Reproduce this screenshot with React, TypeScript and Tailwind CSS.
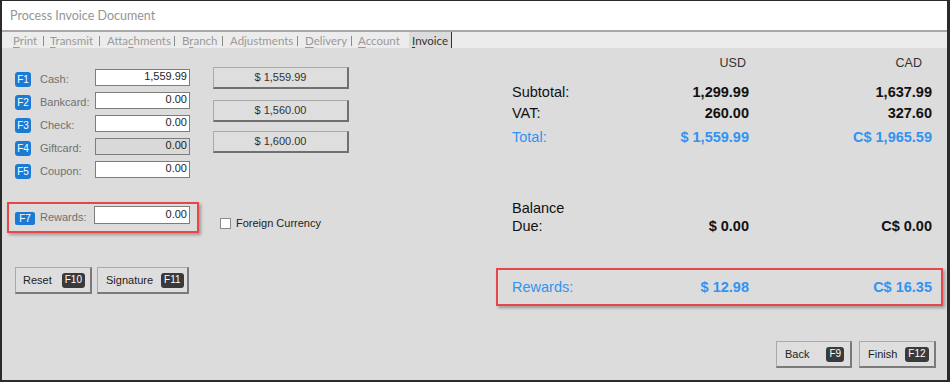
import React from "react";

const SANS = { fontFamily: '"Liberation Sans", Arial, sans-serif' };
const UI = { fontFamily: 'Lato, "Noto Sans", sans-serif' };

function FBadge({ k, wide }: { k: string; wide?: boolean }) {
  return (
    <div
      className={`mt-[3px] flex h-[15px] items-center justify-center rounded-[3px] bg-[#1a7bd6] text-[10px] leading-none text-white ${
        wide ? "w-[20px]" : "w-[16px]"
      }`}
    >
      {k}
    </div>
  );
}

function KBadge({ k }: { k: string }) {
  return (
    <div className="flex h-[15px] items-center rounded-[3px] bg-[#3a3a3a] px-[3px] text-[10px] leading-none text-white">
      {k}
    </div>
  );
}

function Field({ k, label, value, disabled }: { k: string; label: string; value: string; disabled?: boolean }) {
  return (
    <div className="flex h-[17px] items-start">
      <FBadge k={k} />
      <div className="ml-[9px] mt-[3px] w-[55px] text-[11px] leading-[14px] text-[#707070]">{label}</div>
      <div
        className={`flex h-[17px] w-[95px] items-center justify-end border border-[#7d7d7d] pb-[2px] pr-[2px] text-[11px] leading-none text-[#1e1e1e] ${
          disabled ? "bg-[#d9d9d9]" : "bg-white"
        }`}
      >
        {value}
      </div>
    </div>
  );
}

function QuickBtn({ v, cls }: { v: string; cls: string }) {
  return (
    <div
      className={`flex h-[22px] w-[136px] items-center justify-center border border-[#a9a9a9] border-b-2 border-r-2 border-b-[#707070] border-r-[#707070] bg-[#dedede] text-[11px] leading-none text-[#333] ${cls}`}
    >
      {v}
    </div>
  );
}

function ActBtn({ label, k, w, pl, gap }: { label: string; k: string; w: string; pl: string; gap: string }) {
  return (
    <div
      className={`flex h-[27px] items-center border border-[#a9a9a9] border-b-2 border-r-2 border-b-[#7a7a7a] border-r-[#7a7a7a] bg-[#dedede] text-[11px] leading-none text-[#222] ${w} ${pl} ${gap}`}
    >
      <span>{label}</span>
      <KBadge k={k} />
    </div>
  );
}

const tabs: { pre: string; u: string; post: string; w: string; pl: string }[] = [
  { pre: "", u: "P", post: "rint", w: "w-[41px]", pl: "pl-[11px]" },
  { pre: "", u: "T", post: "ransmit", w: "w-[55px]", pl: "pl-[6px]" },
  { pre: "Atta", u: "c", post: "hments", w: "w-[74px]", pl: "pl-[7px]" },
  { pre: "B", u: "r", post: "anch", w: "w-[47px]", pl: "pl-[7px]" },
  { pre: "Adjustments", u: "", post: "", w: "w-[74px]", pl: "pl-[7px]" },
  { pre: "", u: "D", post: "elivery", w: "w-[53px]", pl: "pl-[7px]" },
  { pre: "", u: "A", post: "ccount", w: "w-[57px]", pl: "pl-[6px]" },
];

function Sep() {
  return <div className="mt-[4px] h-[10px] w-px bg-[#8a8a8a]" />;
}

function Row({ label, usd, cad, cls, color }: { label: string; usd: string; cad: string; cls: string; color: string }) {
  return (
    <div className={`grid h-[20px] grid-cols-[140px_97px_183px] items-center text-[14.5px] leading-[20px] ${color} ${cls}`}>
      <div>{label}</div>
      <div className="text-right font-bold">{usd}</div>
      <div className="text-right font-bold">{cad}</div>
    </div>
  );
}

export default function App() {
  return (
    <div className="flex h-[382px] w-[950px] flex-col border-b-2 border-l-2 border-r-[3px] border-t border-[#2b2b2b] bg-[#dcdcdc]" style={SANS}>
      {/* title */}
      <div className="flex h-[29px] items-center bg-white pl-[8px] pt-[2px] text-[12.5px] text-[#959595]" style={UI}>
        Process Invoice Document
      </div>
      <div className="h-[2px] bg-[#a8a8a8]" />
      {/* tabs */}
      <div className="flex h-[16px] bg-[#ececec] text-[11.5px] leading-[17px] text-[#9a9a9a]" style={UI}>
        {tabs.map((t, i) => (
          <React.Fragment key={i}>
            <div className={`${t.w} ${t.pl} shrink-0 whitespace-nowrap`}>
              {t.pre}
              {t.u && <span className="underline underline-offset-2">{t.u}</span>}
              {t.post}
            </div>
            {i < tabs.length - 1 && <Sep />}
          </React.Fragment>
        ))}
        <div className="w-[43px] shrink-0 whitespace-nowrap border-r-[1.5px] border-[#333] bg-[#dcdcdc] pl-[3px] text-[#333]">
          <span className="underline underline-offset-2">I</span>nvoice
        </div>
      </div>

      {/* body */}
      <div className="flex flex-1">
        {/* left */}
        <div className="flex w-[494px] shrink-0 flex-col">
          <div className="flex pl-[13px]">
            <div className="flex flex-col gap-[6px] pt-[21px]">
              <Field k="F1" label="Cash:" value="1,559.99" />
              <Field k="F2" label="Bankcard:" value="0.00" />
              <Field k="F3" label="Check:" value="0.00" />
              <Field k="F4" label="Giftcard:" value="0.00" disabled />
              <Field k="F5" label="Coupon:" value="0.00" />
            </div>
            <div className="ml-[23px] flex flex-col pt-[19px]">
              <QuickBtn v="$ 1,559.99" cls="" />
              <QuickBtn v="$ 1,560.00" cls="mt-[11px]" />
              <QuickBtn v="$ 1,600.00" cls="mt-[9px]" />
            </div>
          </div>

          <div className="mt-[24px] flex items-start pl-[5px]">
            <div className="flex h-[31px] w-[192px] items-start border-2 border-[#e5474b] pl-[6px] pt-[2px] shadow-[2px_2px_3px_rgba(0,0,0,0.3)]">
              <div className="mt-[6px] flex h-[13px] w-[20px] items-center justify-center rounded-[2px] bg-[#1a7bd6] text-[10px] leading-none text-white">
                F7
              </div>
              <div className="ml-[5px] mt-[4px] w-[54px] text-[11px] leading-[14px] text-[#707070]">Rewards:</div>
              <div className="flex h-[18px] w-[96px] items-center justify-end border border-[#7d7d7d] bg-white pb-[2px] pr-[2px] text-[11px] leading-none text-[#1e1e1e]">
                0.00
              </div>
            </div>
            <div className="ml-[21px] mt-[16px] flex items-center">
              <div className="h-[11px] w-[11px] border border-[#8a8a8a] bg-white" />
              <span className="ml-[5px] text-[11px] leading-none text-[#222]">Foreign Currency</span>
            </div>
          </div>

          <div className="mt-[34px] flex gap-[5px] pl-[13px]">
            <ActBtn label="Reset" k="F10" w="w-[77px]" pl="pl-[7px]" gap="gap-[10px]" />
            <ActBtn label="Signature" k="F11" w="w-[92px]" pl="pl-[8px]" gap="gap-[8px]" />
          </div>
        </div>

        {/* right */}
        <div className="flex flex-1 flex-col">
          <div className="mt-[6px] grid h-[18px] grid-cols-[140px_97px_183px] items-center pl-[16px] text-[12.5px] leading-[18px] text-[#333]">
            <div />
            <div className="pr-[3px] text-right">USD</div>
            <div className="pr-[10px] text-right">CAD</div>
          </div>
          <div className="pl-[16px]">
            <Row label="Subtotal:" usd="1,299.99" cad="1,637.99" cls="mt-[10px]" color="text-[#111]" />
            <Row label="VAT:" usd="260.00" cad="327.60" cls="mt-[1px]" color="text-[#111]" />
            <Row label="Total:" usd="$ 1,559.99" cad="C$ 1,965.59" cls="mt-[4px]" color="text-[#3293f2]" />
          </div>
          <div className="mt-[52px] grid grid-cols-[140px_97px_183px] items-end pl-[16px] text-[14.5px] leading-[18px] text-[#111]">
            <div>
              Balance
              <br />
              Due:
            </div>
            <div className="text-right font-bold">$ 0.00</div>
            <div className="text-right font-bold">C$ 0.00</div>
          </div>
          <div className="mr-[4px] mt-[33px] flex h-[38px] items-center border-2 border-[#e5474b] pl-[14px] shadow-[2px_2px_3px_rgba(0,0,0,0.3)]">
            <div className="grid w-full grid-cols-[140px_97px_183px] items-center text-[14.5px] leading-[20px] text-[#3293f2]">
              <div>Rewards:</div>
              <div className="text-right font-bold">$ 12.98</div>
              <div className="text-right font-bold">C$ 16.35</div>
            </div>
          </div>
          <div className="mt-[35px] flex justify-end gap-[7px] pr-[11px]">
            <ActBtn label="Back" k="F9" w="w-[76px]" pl="pl-[8px]" gap="gap-[17px]" />
            <ActBtn label="Finish" k="F12" w="w-[77px]" pl="pl-[8px]" gap="gap-[8px]" />
          </div>
        </div>
      </div>
    </div>
  );
}
